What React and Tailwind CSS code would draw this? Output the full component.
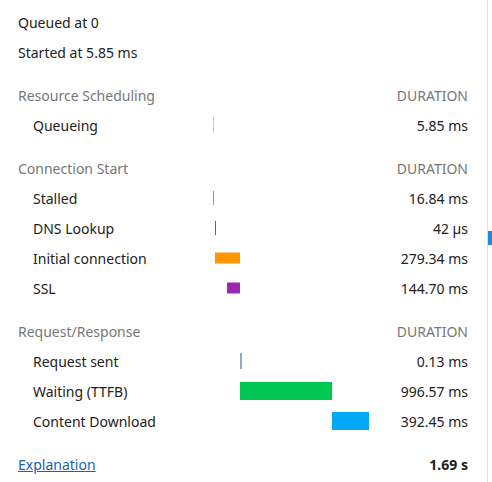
import React from 'react';

const Bar = ({ left, width, h, color }) => (
  <div className="relative h-full w-[157px]">
    <div
      className={`absolute top-1/2 -translate-y-1/2 ${color}`}
      style={{ left, width, height: h }}
    />
  </div>
);

const Row = ({ label, bar, value }) => (
  <div className="flex h-[30px] items-center">
    <div className="w-[213px] pl-[33px]">{label}</div>
    {bar}
    <div className="w-[98px] text-right">{value}</div>
  </div>
);

const Header = ({ title }) => (
  <div className="mt-[13px] flex h-[30px] items-center text-[#777]">
    <div className="w-[370px] pl-[18px]">{title}</div>
    <div className="w-[98px] text-right">DURATION</div>
  </div>
);

export default function App() {
  return (
    <div className="flex h-[482px] w-[492px] bg-white text-[14px] text-[#222]" style={{ fontFamily: '"Noto Sans", "Open Sans", sans-serif' }}>
      <div className="w-[487px] pt-[7px]">
        <div className="flex h-[30px] items-center pl-[18px]">Queued at 0</div>
        <div className="flex h-[30px] items-center pl-[18px]">Started at 5.85 ms</div>

        <Header title="Resource Scheduling" />
        <Row label="Queueing" value="5.85 ms" bar={<Bar left={0} width={1} h={16} color="bg-[#ccc]" />} />

        <Header title="Connection Start" />
        <Row label="Stalled" value="16.84 ms" bar={<Bar left={0} width={1} h={14} color="bg-[#999]" />} />
        <Row label="DNS Lookup" value="42 µs" bar={<Bar left={2} width={1} h={14} color="bg-[#666]" />} />
        <Row label="Initial connection" value="279.34 ms" bar={<Bar left={2} width={25} h={11} color="bg-[#ff9800]" />} />
        <Row label="SSL" value="144.70 ms" bar={<Bar left={14} width={13} h={11} color="bg-[#9c27b0]" />} />

        <Header title="Request/Response" />
        <Row label="Request sent" value="0.13 ms" bar={<Bar left={27} width={2} h={16} color="bg-[#9aa8b8]" />} />
        <Row label="Waiting (TTFB)" value="996.57 ms" bar={<Bar left={27} width={92} h={18} color="bg-[#00c853]" />} />
        <Row label="Content Download" value="392.45 ms" bar={<Bar left={119} width={37} h={18} color="bg-[#03a9f4]" />} />

        <div className="mt-[13px] flex h-[30px] items-center">
          <a href="#" className="w-[370px] pl-[18px] text-[#1a5fb4] underline">Explanation</a>
          <div className="w-[98px] text-right font-bold">1.69 s</div>
        </div>
      </div>
      <div className="flex w-[5px] flex-col border-l border-[#ddd]">
        <div className="mt-[231px] h-[14px] w-full bg-[#1e88e5]" />
      </div>
    </div>
  );
}
